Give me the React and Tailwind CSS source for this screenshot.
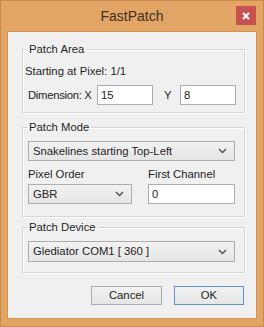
import React from 'react';

const font = { fontFamily: '"Liberation Sans", Arial, sans-serif' };

const Chevron = () => (
  <svg width="9" height="6" viewBox="0 0 9 6" className="shrink-0">
    <polyline points="1,1 4.5,4.5 8,1" fill="none" stroke="#555" strokeWidth="1.5" />
  </svg>
);

const Combo = ({ value, className = '' }) => (
  <div
    className={`flex items-center justify-between border border-[#acacac] bg-gradient-to-b from-[#f2f2f2] to-[#e5e5e5] pl-[4px] pr-[7px] ${className}`}
  >
    <span className="truncate">{value}</span>
    <Chevron />
  </div>
);

const TextBox = ({ value, className = '' }) => (
  <div className={`flex items-center border border-[#abadb3] bg-white pl-[3px] ${className}`}>
    {value}
  </div>
);

const Group = ({ title, className = '', children }) => (
  <fieldset
    className={`ml-[14px] w-[223px] border border-[#d5d5d5] shadow-[1px_1px_0_#fff,inset_1px_1px_0_#fff] ${className}`}
  >
    <legend className="ml-[4px] px-[2px] leading-[14px]">{title}</legend>
    {children}
  </fieldset>
);

export default function App() {
  return (
    <div
      className="flex h-[327px] w-[264px] flex-col whitespace-nowrap border border-[#c98a4a] bg-[#e3a565] text-[11.3px] text-[#1e1e1e]"
      style={font}
    >
      <div className="relative flex h-[30px] shrink-0 items-center justify-center">
        <span className="text-[14px] text-[#3d3023]">FastPatch</span>
        <div className="absolute right-[7px] top-[5px] flex h-[19px] w-[20px] items-center justify-center bg-[#c75050]">
          <svg width="8" height="8" viewBox="0 0 8 8">
            <path d="M1 1 L7 7 M7 1 L1 7" stroke="#fff" strokeWidth="2" />
          </svg>
        </div>
      </div>

      <div className="mx-[6px] mb-[7px] flex flex-1 flex-col border border-[#cf9352] bg-[#f0f0f0]">
        <Group title="Patch Area" className="mt-[10px] h-[71px]">
          <div className="mt-[8px] pl-[2px] leading-[14px]">Starting at Pixel: 1/1</div>
          <div className="mt-[7px] flex h-[20px] items-center pl-[5px]">
            <span className="w-[69px] tracking-[-0.3px]">Dimension: X</span>
            <TextBox value="15" className="h-[20px] w-[56px]" />
            <span className="ml-[11px] w-[16px]">Y</span>
            <TextBox value="8" className="h-[20px] w-[56px]" />
          </div>
        </Group>

        <Group title="Patch Mode" className="mt-[7px] h-[97px]">
          <div className="mt-[7px] pl-[5px]">
            <Combo value="Snakelines starting Top-Left" className="h-[20px] w-[207px]" />
          </div>
          <div className="mt-[6px] flex pl-[5px] leading-[14px]">
            <span className="w-[120px]">Pixel Order</span>
            <span>First Channel</span>
          </div>
          <div className="mt-[3px] flex pl-[5px]">
            <Combo value="GBR" className="h-[20px] w-[104px]" />
            <TextBox value="0" className="ml-[16px] h-[20px] w-[87px]" />
          </div>
        </Group>

        <Group title="Patch Device" className="mt-[3px] h-[53px]">
          <div className="mt-[7px] pl-[5px]">
            <Combo value="Glediator COM1 [ 360 ]" className="h-[21px] w-[207px]" />
          </div>
        </Group>

        <div className="mt-[13px] flex justify-end gap-[12px] pr-[12px]">
          <button className="flex h-[19px] w-[71px] items-center justify-center border border-[#acacac] bg-gradient-to-b from-[#f2f2f2] to-[#e5e5e5]">
            Cancel
          </button>
          <button className="flex h-[19px] w-[70px] items-center justify-center border border-[#5e8fc6] bg-gradient-to-b from-[#f2f2f2] to-[#e5e5e5]">
            OK
          </button>
        </div>
      </div>
    </div>
  );
}
